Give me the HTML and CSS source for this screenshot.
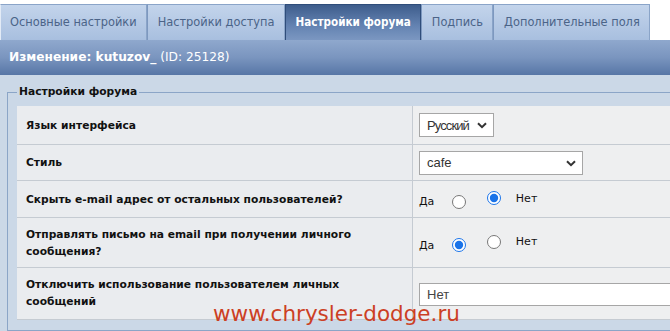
FILE: index.html
```html
<!DOCTYPE html>
<html lang="ru">
<head>
<meta charset="utf-8">
<title>Настройки форума</title>
<link rel="stylesheet" href="styles.css">
</head>
<body>
<div class="page">
  <nav class="tabs">
    <a class="tab">Основные настройки</a>
    <a class="tab">Настройки доступа</a>
    <a class="tab active">Настройки форума</a>
    <a class="tab">Подпись</a>
    <a class="tab">Дополнительные поля</a>
  </nav>
  <div class="header"><b>Изменение: kutuzov_</b> (ID: 25128)</div>
  <div class="content">
    <fieldset class="box">
      <legend>Настройки форума</legend>
      <table class="settings">
        <tr class="r1">
          <td class="label">Язык интерфейса</td>
          <td class="value">
            <span class="select-wrap short">
              <select class="select"><option>Русский</option></select>
              <svg class="chev" width="10" height="7" viewBox="0 0 10 7"><path d="M1 1.2 L5 5.2 L9 1.2" fill="none" stroke="#333" stroke-width="2"/></svg>
            </span>
          </td>
        </tr>
        <tr class="r2">
          <td class="label">Стиль</td>
          <td class="value">
            <span class="select-wrap wide">
              <select class="select"><option>cafe</option></select>
              <svg class="chev" width="10" height="7" viewBox="0 0 10 7"><path d="M1 1.2 L5 5.2 L9 1.2" fill="none" stroke="#333" stroke-width="2"/></svg>
            </span>
          </td>
        </tr>
        <tr class="r3">
          <td class="label">Скрыть e-mail адрес от остальных пользователей?</td>
          <td class="value">
            <label class="opt">Да <input type="radio" name="hide"></label>
            <label class="opt"><input type="radio" name="hide" checked> Нет</label>
          </td>
        </tr>
        <tr class="r4">
          <td class="label">Отправлять письмо на email при получении личного сообщения?</td>
          <td class="value">
            <label class="opt">Да <input type="radio" name="notify" checked></label>
            <label class="opt"><input type="radio" name="notify"> Нет</label>
          </td>
        </tr>
        <tr class="r5">
          <td class="label">Отключить использование пользователем личных сообщений</td>
          <td class="value"><input class="text" type="text" value="Нет"></td>
        </tr>
      </table>
    </fieldset>
  </div>
  <div class="watermark">www.chrysler-dodge.ru</div>
</div>
</body>
</html>
```

FILE: styles.css
```css
html, body {
  margin: 0;
  padding: 0;
  background: #ffffff;
  overflow: hidden;
}
.page {
  position: relative;
  width: 670px;
  height: 331px;
  overflow: hidden;
  font-family: "DejaVu Sans", Verdana, sans-serif;
}
.tabs {
  display: flex;
  padding-top: 4px;
  background: #ffffff;
}
.tab {
  display: block;
  height: 35px;
  line-height: 35px;
  padding: 0 9px 0 9px;
  font-size: 11.4px;
  color: #4b6488;
  background: linear-gradient(#c3d4eb, #a8bfdf);
  border: 1px solid #8aa4c8;
  border-bottom: none;
  border-left-color: #e3ebf6;
  white-space: nowrap;
}
.tab + .tab {
  border-left: 1px solid #7d98bf;
  padding-left: 10px;
}
.tab.active {
  color: #ffffff;
  font-family: "DejaVu Sans Condensed", "DejaVu Sans", sans-serif;
  font-stretch: semi-condensed;
  font-size: 11.6px;
  font-weight: bold;
  background: linear-gradient(#3e5d8c, #6483b2 60%, #7b97c1);
  border-color: #2f4d7a;
}
.header {
  height: 35px;
  line-height: 34px;
  padding-left: 9px;
  color: #ffffff;
  font-size: 12.2px;
  background: linear-gradient(#8fa8cd, #7a95bf 50%, #5776a6);
}
.header b {
  font-weight: bold;
}
.content {
  background: #cbd8e7;
  padding: 9px 0 6px 7px;
  width: 700px;
}
.box {
  margin: 0;
  padding: 6px 9px 10px 9px;
  border: 1px solid #8ba5c7;
  border-right: none;
}
.box legend {
  padding: 0 2px;
  font-size: 10.7px;
  font-weight: bold;
  color: #111111;
  line-height: 16px;
}
.settings {
  width: 100%;
  border-collapse: collapse;
  font-size: 11px;
  color: #111111;
}
.settings td {
  border-top: 1px solid #c5cbd2;
  border-bottom: 1px solid #c5cbd2;
  padding: 0;
  vertical-align: middle;
  line-height: 17px;
}
.label {
  width: 370px;
  padding-left: 9px !important;
  padding-right: 16px !important;
  font-size: 10.7px;
  font-weight: bold;
  background: #eaecef;
  border-right: 1px solid #c5cbd2;
}
.value {
  padding-left: 6px !important;
  background: #eeeff0;
}
.r1 td { height: 38px; border-top: none; }
.r2 td { height: 35px; }
.r3 td { height: 36px; }
.r4 td { height: 49px; }
.r5 td { height: 49px; }
.r5 .label { padding-bottom: 2px !important; }
.select-wrap {
  position: relative;
  display: inline-block;
  vertical-align: middle;
}
.select {
  appearance: none;
  -webkit-appearance: none;
  height: 24px;
  border: 1px solid #a6a6a6;
  border-radius: 0;
  background: #ffffff;
  font-family: "Liberation Sans", Arial, sans-serif;
  font-size: 13px;
  color: #333333;
  padding: 0 0 0 7px;
  margin: 0;
}
.short .select { width: 75px; letter-spacing: -0.9px; }
.wide .select { width: 164px; }
.chev {
  position: absolute;
  right: 7px;
  top: 9px;
  pointer-events: none;
}
.opt {
  display: inline-flex;
  align-items: center;
  font-size: 11px;
  color: #111111;
  margin-right: 17px;
  position: relative;
  top: 1px;
}
.opt input {
  width: 14px;
  height: 14px;
  margin: 0 0 0 18px;
  accent-color: #1a73e8;
}
.opt + .opt input {
  margin: 0 15px 0 0;
}
.text {
  display: block;
  width: 270px;
  height: 23px;
  box-sizing: border-box;
  border: 1px solid #a6a6a6;
  font-family: "Liberation Sans", Arial, sans-serif;
  font-size: 13px;
  color: #444444;
  padding: 0 7px;
  margin: 1px 0 0 0;
}
.watermark {
  position: absolute;
  left: 213px;
  top: 301px;
  font-family: "DejaVu Sans", Verdana, sans-serif;
  font-size: 21.5px;
  color: #cc3f24;
}
```
